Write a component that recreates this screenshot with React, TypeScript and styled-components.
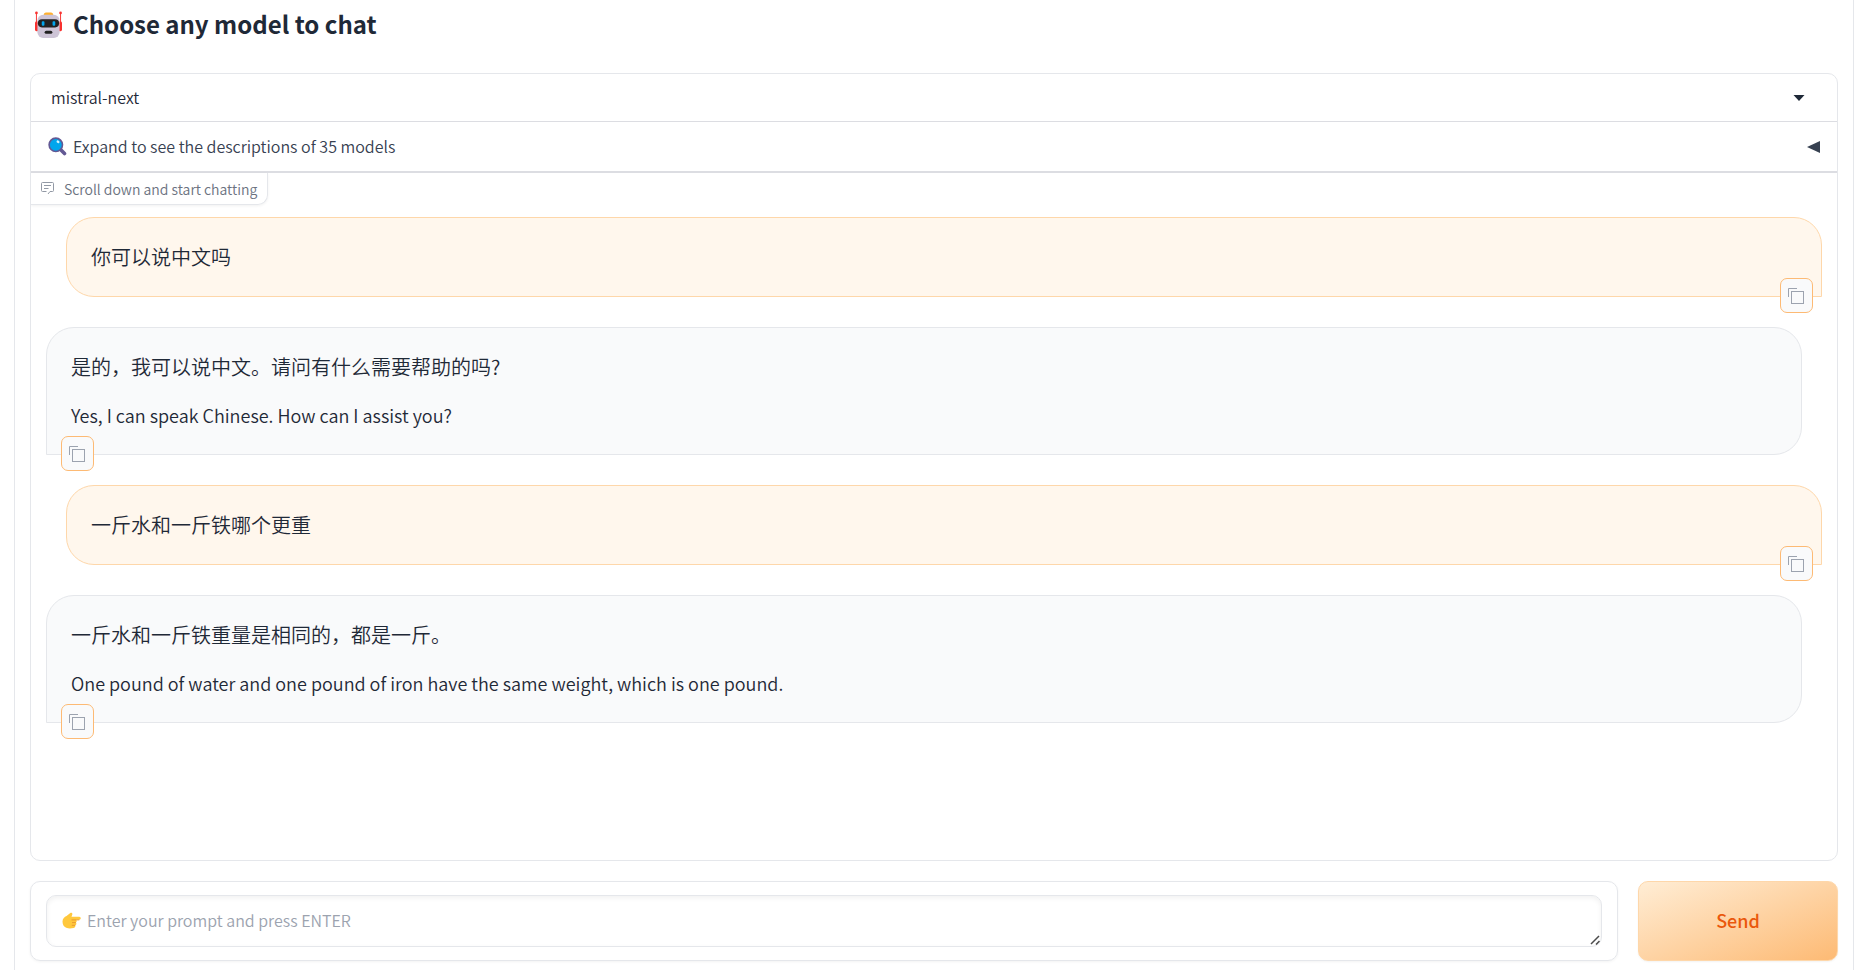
import React, { useState } from "react";
import styled, { createGlobalStyle, css } from "styled-components";

const GlobalStyle = createGlobalStyle`
  *, *::before, *::after { box-sizing: border-box; }
  body {
    margin: 0;
    background: #ffffff;
    color: #1f2937;
    font-family: "Noto Sans CJK SC", "Noto Sans", sans-serif;
    font-size: 16px;
    font-weight: 350;
    line-height: 24px;
  }
  button, select, textarea { font: inherit; color: inherit; }
  svg { display: block; flex: none; }
`;

const line = "#e5e7eb";

const Page = styled.main`
  margin: 0 8px 0 14px;
  padding: 0 15px 10px;
  min-height: 100vh;
  border: solid ${line};
  border-width: 0 1px;
`;

const Heading = styled.h2`
  display: flex;
  align-items: center;
  gap: 11px;
  margin: 0;
  padding: 5px 0 30px 5px;
  font-size: 24px;
  line-height: 38px;
  font-weight: 700;
`;

const Card = styled.section`
  border: 1px solid ${line};
  border-radius: 10px;
  overflow: hidden;
`;

const SelectRow = styled.label`
  display: flex;
  align-items: center;
  height: 48px;
  padding-right: 32px;
  border-bottom: 1px solid #dcdde2;
`;

const ModelSelect = styled.select`
  flex: 1;
  height: 100%;
  padding: 0 20px 2px;
  border: 0;
  background: transparent;
  appearance: none;
  outline: none;
`;

const Accordion = styled.button`
  display: flex;
  align-items: center;
  gap: 6px;
  width: 100%;
  height: 51px;
  padding: 0 17px;
  border: 0;
  border-bottom: 2px solid #dcdde2;
  background: #ffffff;
  color: #374151;
  text-align: left;
`;

const AccordionLabel = styled.span`
  flex: 1;
  padding-bottom: 2px;
`;

const ChatLabel = styled.div`
  display: inline-flex;
  align-items: center;
  gap: 10px;
  height: 32px;
  padding: 0 10px;
  border: solid ${line};
  border-width: 0 1px 1px 0;
  border-radius: 0 0 10px 0;
  box-shadow: 0 1px 3px rgba(0, 0, 0, 0.06);
  color: #6b7280;
  font-size: 14px;
  vertical-align: top;
`;

const Messages = styled.div`
  display: flex;
  flex-direction: column;
  gap: 30px;
  min-height: 655px;
  padding: 12px 15px;
`;

const Bubble = styled.article<{ $user?: boolean }>`
  position: relative;
  display: flex;
  flex-direction: column;
  gap: 18px;
  padding: 24px;
  border: 1px solid ${line};
  border-radius: 28px 28px 28px 0;
  background: #f9fafb;
  margin-right: 20px;
  ${(p) =>
    p.$user &&
    css`
      margin: 0 0 0 20px;
      border-color: #fed7aa;
      border-radius: 28px 28px 0 28px;
      background: #fff7ed;
    `}
`;

const Text = styled.p<{ $latin?: boolean }>`
  margin: 0;
  font-size: ${(p) => (p.$latin ? 18 : 20)}px;
  line-height: 30px;
`;

const CopyButton = styled.button<{ $user?: boolean }>`
  position: absolute;
  bottom: -17px;
  ${(p) => (p.$user ? "right: 8px;" : "left: 14px;")}
  display: flex;
  align-items: center;
  justify-content: center;
  width: 33px;
  height: 35px;
  padding: 0 1px 0 0;
  border: 1px solid #fdba74;
  border-radius: 7px;
  background: #f9fafb;
`;

const Composer = styled.form`
  display: flex;
  gap: 20px;
  margin-top: 20px;
`;

const PromptCard = styled.div`
  flex: 1;
  height: 80px;
  padding: 13px 15px;
  border: 1px solid ${line};
  border-radius: 10px;
  box-shadow: 0 1px 3px rgba(0, 0, 0, 0.05);
`;

const PromptField = styled.label`
  position: relative;
  display: flex;
  align-items: center;
  height: 52px;
  padding-left: 15px;
  border: 1px solid ${line};
  border-radius: 10px;
  box-shadow: inset 0 2px 5px rgba(0, 0, 0, 0.06);
`;

const Prompt = styled.textarea`
  flex: 1;
  height: 50px;
  padding: 12px 6px;
  border: 0;
  outline: none;
  background: transparent;
  resize: none;
  &::placeholder { color: #9ca3af; opacity: 1; }
`;

const ResizeGrip = styled.svg`
  position: absolute;
  right: 1px;
  bottom: 1px;
`;

const SendButton = styled.button`
  width: 200px;
  height: 80px;
  padding: 0 0 2px;
  border: 1px solid #fed7aa;
  border-radius: 10px;
  background: linear-gradient(to bottom right, #ffedd5, #fdba74);
  box-shadow: 0 1px 2px rgba(0, 0, 0, 0.05);
  color: #ea580c;
  font-size: 18px;
  font-weight: 500;
`;

const RobotIcon = () => (
  <svg width="27" height="27" viewBox="0 0 28 28" aria-hidden="true">
    <path d="M1.5 2v10M26.5 2v10" stroke="#f8312f" strokeWidth="1" />
    <circle cx="1.5" cy="2" r="1.4" fill="#f8312f" />
    <circle cx="26.5" cy="2" r="1.4" fill="#f8312f" />
    <rect x="0" y="11" width="4" height="10" rx="1.5" fill="#f8312f" />
    <rect x="24" y="11" width="4" height="10" rx="1.5" fill="#f8312f" />
    <path d="M9 4.500C9 2.500 10 1.500 11.500 1.500h5c1.500 0 2.500 1 2.500 3z" fill="#ffb02e" />
    <rect x="2.5" y="4" width="23" height="24" rx="6" fill="#cdc4d6" />
    <rect x="3" y="8.5" width="22" height="8.5" rx="4.2" fill="#212121" />
    <rect x="7" y="10.5" width="2.8" height="4.8" rx="1" fill="#00a6ed" />
    <rect x="18.2" y="10.5" width="2.8" height="4.8" rx="1" fill="#00a6ed" />
    <rect x="10" y="20.5" width="8" height="3.2" rx="1.6" fill="#212121" />
  </svg>
);

const SearchIcon = () => (
  <svg width="19" height="19" viewBox="0 0 19 19" aria-hidden="true">
    <path d="M12 12l4.500 4.500" stroke="#635994" strokeWidth="3.6" strokeLinecap="round" />
    <circle cx="7.8" cy="7.800" r="6.700" fill="#00a6ed" stroke="#635994" strokeWidth="1.6" />
    <ellipse cx="10" cy="4.8" rx="1.6" ry="1.2" fill="#d3f3ff" transform="rotate(35 10 4.8)" />
  </svg>
);

const PointIcon = () => (
  <svg width="19" height="18" viewBox="0 0 19 18" aria-hidden="true">
    <path
      d="M0.5 9.5C0.5 6.500 2.500 5 4.500 4L8.300 1c1-.8 2.400.2 2 1.400L9.500 4.800h7.800c1.900 0 1.900 3 0 3h-3.500c1.200.5 1.200 2.300 0 2.700.9.800.7 2.400-.6 2.700.5 1.200-.2 2.500-1.700 2.800-2.500.5-5 .6-7.300-.2C1.800 14.900.5 12.500.5 9.500z"
      fill="#ffc83d"
    />
    <path d="M9.500 7.900h7.800M10 10.600h3.800M9.800 13.300h3.400" stroke="#e8952e" strokeWidth="0.9" fill="none" />
  </svg>
);

const ChatIcon = () => (
  <svg width="13" height="13" viewBox="0 0 13 13" fill="none" stroke="#9299a5" aria-hidden="true">
    <path d="M5.500 9.500h-4a1 1 0 0 1-1-1v-7a1 1 0 0 1 1-1h10a1 1 0 0 1 1 1v7a1 1 0 0 1-1 1H9l-2 2.500" />
    <path d="M3 3.500h7M3 6.500h4.500" />
  </svg>
);

const CopyIcon = () => (
  <svg width="16" height="16" viewBox="0 0 16 16" fill="none" stroke="#9ca3af" aria-hidden="true">
    <path d="M0.500 9V0.500H9" />
    <rect x="3.5" y="3.5" width="12" height="12" />
  </svg>
);

const DownIcon = () => (
  <svg width="12" height="6" viewBox="0 0 12 6" fill="#1f2937" aria-hidden="true">
    <path d="M0.500 0h11L6 6z" />
  </svg>
);

const LeftIcon = () => (
  <svg width="13" height="12" viewBox="0 0 13 12" fill="#374151" aria-hidden="true">
    <path d="M0 6L13 0v12z" />
  </svg>
);

type Message = { user?: boolean; lines: { text: string; latin?: boolean }[] };

const conversation: Message[] = [
  { user: true, lines: [{ text: "你可以说中文吗" }] },
  {
    lines: [
      { text: "是的，我可以说中文。请问有什么需要帮助的吗?" },
      { text: "Yes, I can speak Chinese. How can I assist you?", latin: true },
    ],
  },
  { user: true, lines: [{ text: "一斤水和一斤铁哪个更重" }] },
  {
    lines: [
      { text: "一斤水和一斤铁重量是相同的，都是一斤。" },
      { text: "One pound of water and one pound of iron have the same weight, which is one pound.", latin: true },
    ],
  },
];

export default function App() {
  const [prompt, setPrompt] = useState("");
  return (
    <>
      <GlobalStyle />
      <Page>
        <Heading>
          <RobotIcon />
          Choose any model to chat
        </Heading>
        <Card>
          <SelectRow>
            <ModelSelect aria-label="Model" defaultValue="mistral-next">
              <option>mistral-next</option>
            </ModelSelect>
            <DownIcon />
          </SelectRow>
          <Accordion type="button" aria-expanded={false}>
            <SearchIcon />
            <AccordionLabel>Expand to see the descriptions of 35 models</AccordionLabel>
            <LeftIcon />
          </Accordion>
          <ChatLabel>
            <ChatIcon />
            Scroll down and start chatting
          </ChatLabel>
          <Messages>
            {conversation.map((message, i) => (
              <Bubble key={i} $user={message.user}>
                {message.lines.map((l) => (
                  <Text key={l.text} $latin={l.latin} lang={l.latin ? "en" : "zh-CN"}>
                    {l.text}
                  </Text>
                ))}
                <CopyButton type="button" $user={message.user} aria-label="Copy message">
                  <CopyIcon />
                </CopyButton>
              </Bubble>
            ))}
          </Messages>
        </Card>
        <Composer onSubmit={(e) => e.preventDefault()}>
          <PromptCard>
            <PromptField>
              <PointIcon />
              <Prompt
                aria-label="Prompt"
                rows={1}
                value={prompt}
                onChange={(e) => setPrompt(e.target.value)}
                placeholder="Enter your prompt and press ENTER"
              />
              <ResizeGrip width="10" height="10" viewBox="0 0 10 10" fill="none" stroke="#4b4b4b" strokeWidth="1.5" aria-hidden="true">
                <path d="M1 9L9 1M6 9.500L9.500 6" />
              </ResizeGrip>
            </PromptField>
          </PromptCard>
          <SendButton type="submit">Send</SendButton>
        </Composer>
      </Page>
    </>
  );
}
